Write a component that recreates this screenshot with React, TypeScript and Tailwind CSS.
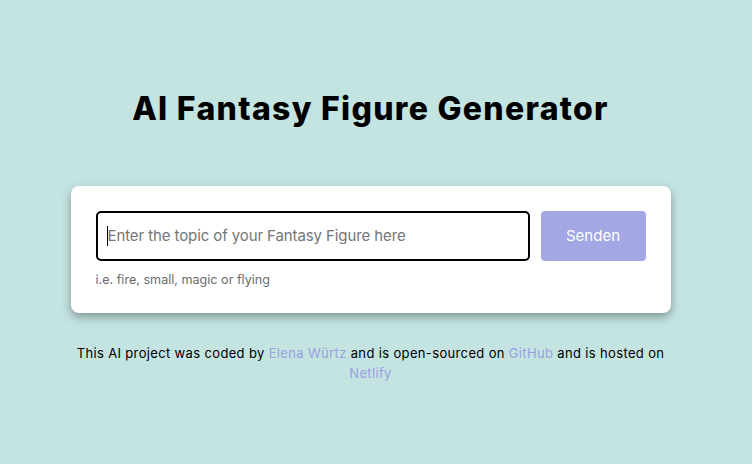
export default function App() {
  return (
    <div className="min-h-[464px] w-full bg-[#c4e4e2] flex flex-col items-center pt-[85px] pr-[11px]" style={{ fontFamily: 'Inter, "Open Sans", sans-serif' }}>
      <h1 className="text-[32px] leading-[48px] font-extrabold text-black tracking-[1.3px]">AI Fantasy Figure Generator</h1>
      <div className="mt-[53px] w-[600px] bg-white rounded-lg shadow-[0_4px_10px_rgba(0,0,0,0.35)] px-[25px] pt-[25px] pb-[24px]">
        <div className="flex gap-[11px]">
          <div className="flex-1 h-[50px] border-2 border-black rounded-[5px] flex items-center px-[9px]">
            <span className="w-px h-[20px] bg-black"></span>
            <span className="text-[15px] text-[#757575] tracking-[-0.1px]">Enter the topic of your Fantasy Figure here</span>
          </div>
          <button className="w-[105px] h-[50px] rounded-[4px] bg-[#a3a8e4] text-white text-[15px]">Senden</button>
        </div>
        <p className="mt-[10px] text-[12.6px] leading-[18px] text-[#6b6b6b]">i.e. fire, small, magic or flying</p>
      </div>
      <p className="mt-[30px] w-[610px] text-center text-[13px] leading-[20px] text-black tracking-[0.35px]">
        This AI project was coded by <span className="text-[#9a9fdd]">Elena Würtz</span> and is open-sourced on <span className="text-[#9a9fdd]">GitHub</span> and is hosted on <span className="text-[#9a9fdd]">Netlify</span>
      </p>
    </div>
  );
}
